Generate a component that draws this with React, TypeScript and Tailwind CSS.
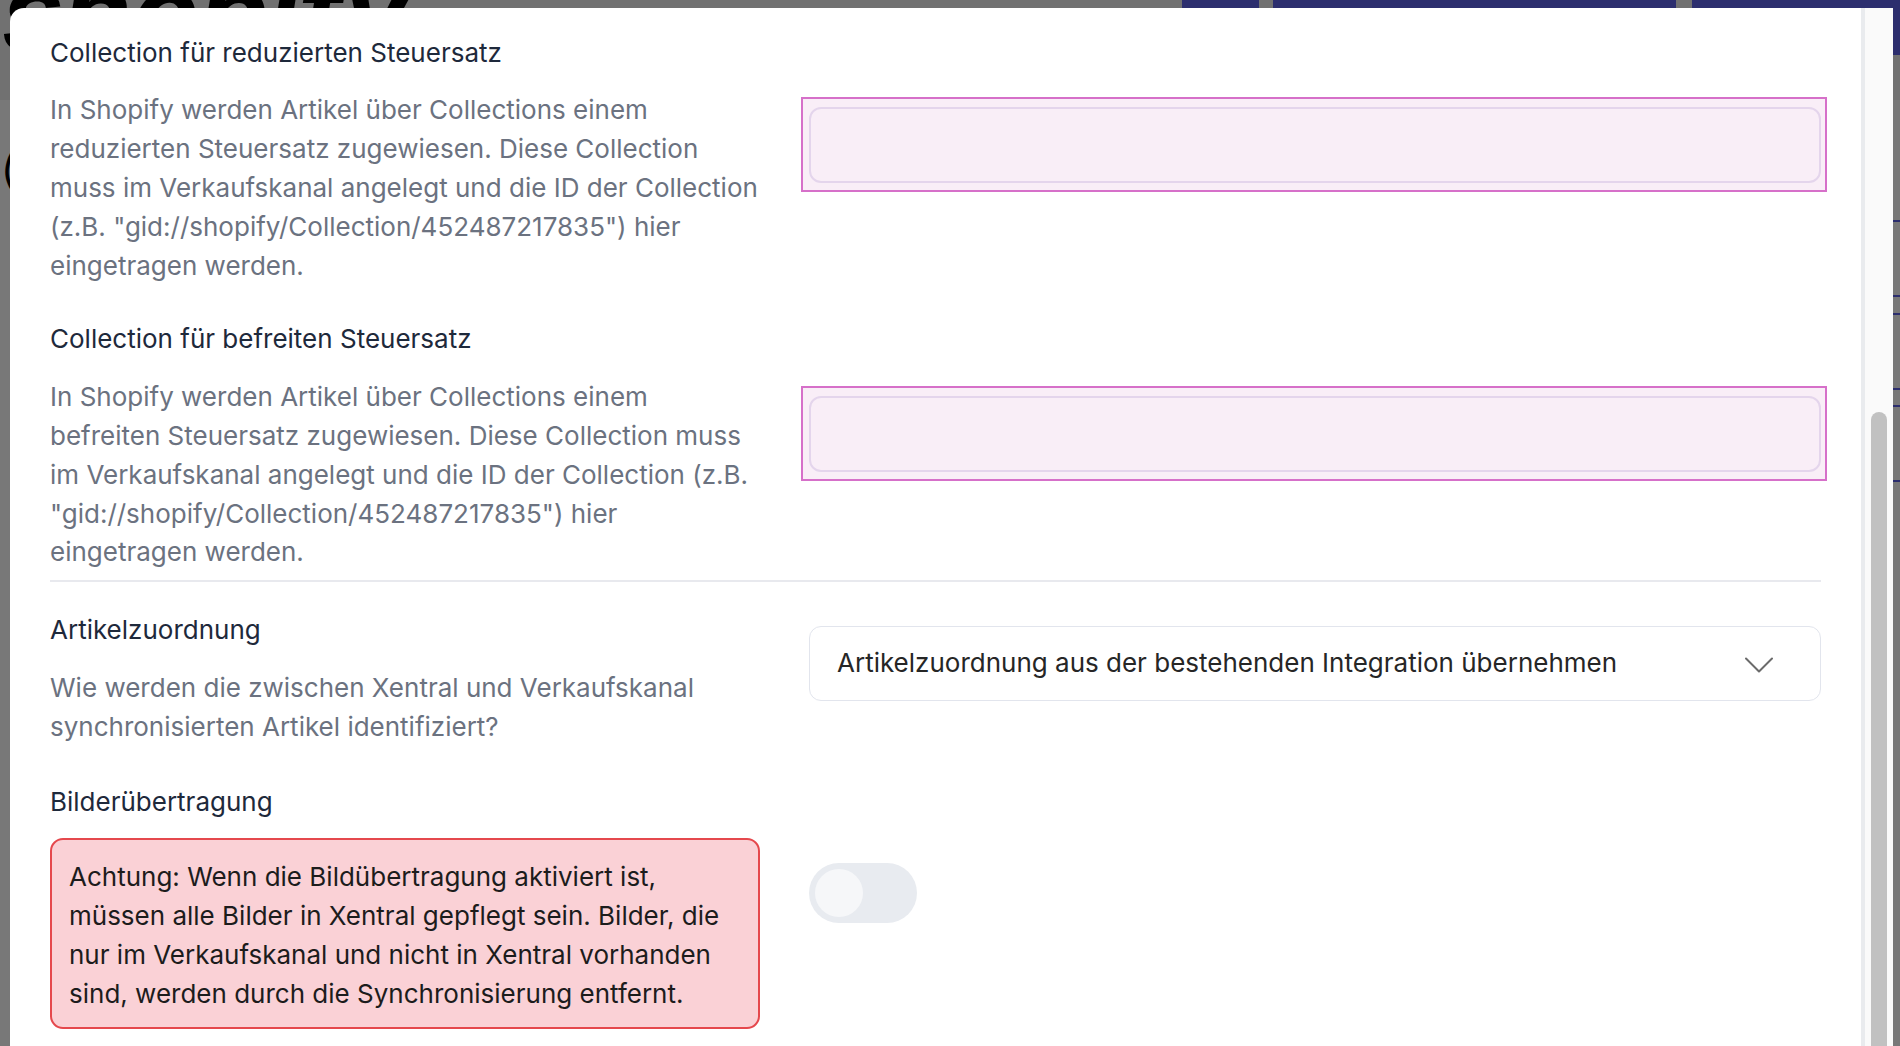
import type { ReactNode } from "react";

function Heading({ children }: { children: ReactNode }) {
	return <h3 className="text-[26px] leading-[38.8px] font-normal text-[#1e293b]">{children}</h3>;
}

function Description({ children }: { children: ReactNode }) {
	return <p className="mt-[19px] text-[26px] leading-[38.8px] text-[#6b7280]">{children}</p>;
}

function HighlightedInput() {
	return (
		<div className="-ml-[8px] -mr-[6px] border-2 border-[#d670c9] bg-[#f9eef7] pl-[6px] pr-[4px] pt-[8px] pb-[7.4px]">
			<input
				type="text"
				className="block h-[76px] w-full rounded-[12px] border-2 border-[#e4d5ec] bg-transparent outline-none"
			/>
		</div>
	);
}

function BackgroundPage() {
	return (
		<div className="flex h-full flex-col">
			<div className="flex h-[100px] items-start overflow-hidden bg-[#f0f0f0]">
				<span className="-mt-[44px] ml-[2px] text-[110px] font-bold italic leading-none text-black">shopify</span>
				<div className="ml-auto flex">
					<div className="h-[55px] w-[77px] bg-[#5f63ea]" />
					<div className="ml-[14px] h-[55px] w-[403px] bg-[#5f63ea]" />
					<div className="ml-[16px] h-[55px] w-[208px] bg-[#5f63ea]" />
				</div>
			</div>
			<div className="flex">
				<div className="pl-[1px] pt-[50px] text-[40px] leading-none text-black">(</div>
				<div className="ml-auto flex w-[600px] flex-col">
					<div className="mt-[120px] h-[2px] bg-[#5f63ea]" />
					<div className="mt-[73px] h-[2px] bg-[#5f63ea]" />
					<div className="mt-[16px] h-[2px] bg-[#5f63ea]" />
					<div className="mt-[73px] h-[2px] bg-[#5f63ea]" />
					<div className="mt-[15px] h-[2px] bg-[#5f63ea]" />
					<div className="mt-[73px] h-[2px] bg-[#5f63ea]" />
				</div>
			</div>
		</div>
	);
}

export default function App() {
	return (
		<div className="relative h-[1046px] w-full overflow-hidden bg-white font-[Inter,sans-serif]">
			<BackgroundPage />
			<div className="absolute inset-0 bg-black/[0.53]" />

			{/* MODAL */}
			<div className="absolute left-[10px] right-[7px] top-[8px] flex h-[1100px] overflow-hidden rounded-tl-[14px] bg-white">
				<div className="flex-1 px-[40px] pt-[25.6px]">
					{/* REDUZIERTER STEUERSATZ */}
					<div className="grid grid-cols-[710px_1fr] gap-x-[49px]">
						<div>
							<Heading>Collection für reduzierten Steuersatz</Heading>
							<Description>
								In Shopify werden Artikel über Collections einem reduzierten Steuersatz zugewiesen. Diese
								Collection muss im Verkaufskanal angelegt und die ID der Collection
								(z.B. "gid://shopify/Collection/452487217835") hier eingetragen werden.
							</Description>
						</div>
						<div className="pt-[63px]">
							<HighlightedInput />
						</div>
					</div>

					{/* BEFREITER STEUERSATZ */}
					<div className="mt-[35px] grid grid-cols-[710px_1fr] gap-x-[49px]">
						<div>
							<Heading>Collection für befreiten Steuersatz</Heading>
							<Description>
								In Shopify werden Artikel über Collections einem befreiten Steuersatz zugewiesen. Diese
								Collection muss im Verkaufskanal angelegt und die ID der Collection (z.B.
								"gid://shopify/Collection/452487217835") hier eingetragen werden.
							</Description>
						</div>
						<div className="pt-[65.5px]">
							<HighlightedInput />
						</div>
					</div>

					<div className="mt-[8px] h-[2px] bg-[#e8e9ee]" />

					{/* ARTIKELZUORDNUNG */}
					<div className="mt-[29px] grid grid-cols-[710px_1fr] gap-x-[49px]">
						<div>
							<Heading>Artikelzuordnung</Heading>
							<Description>
								Wie werden die zwischen Xentral und Verkaufskanal synchronisierten Artikel identifiziert?
							</Description>
						</div>
						<div className="pt-[15px]">
							<div className="flex h-[75px] items-center justify-between rounded-[12px] border-[1.5px] border-[#e2e5ed] bg-white pl-[27px] pr-[47px]">
								<span className="text-[26px] leading-[38.8px] text-[#262626]">
									Artikelzuordnung aus der bestehenden Integration übernehmen
								</span>
								<svg width="28" height="16" viewBox="0 0 28 16" fill="none" className="mt-[3px]">
									<polyline
										points="1 1.5 14 14.5 27 1.5"
										stroke="#6b6b6b"
										strokeWidth="2"
										strokeLinecap="round"
										strokeLinejoin="round"
									/>
								</svg>
							</div>
						</div>
					</div>

					{/* BILDERÜBERTRAGUNG */}
					<div className="mt-[36px] grid grid-cols-[710px_1fr] gap-x-[49px]">
						<div>
							<Heading>Bilderübertragung</Heading>
							<div className="mt-[16.5px] rounded-[13px] border-2 border-[#e5484d] bg-[#fad1d6] pl-[17px] pr-[20px] pt-[17px] pb-[13.5px] text-[26px] leading-[39.2px] text-[#1c1c1c]">
								Achtung: Wenn die Bildübertragung aktiviert ist, müssen alle Bilder in Xentral gepflegt
								sein. Bilder, die nur im Verkaufskanal und nicht in Xentral vorhanden sind, werden durch
								die Synchronisierung entfernt.
							</div>
						</div>
						<div className="pt-[80px]">
							<div className="flex h-[60px] w-[108px] items-center rounded-full bg-[#e8ebf0] px-[6px]">
								<div className="h-[48px] w-[48px] rounded-full bg-[#f6f7f9]" />
							</div>
						</div>
					</div>
				</div>

				{/* SCROLLBAR */}
				<div className="w-[32px] border-l-4 border-[#e9ebee] bg-[#fafafa]">
					<div className="ml-[6px] mt-[404px] h-[720px] w-[16px] rounded-full bg-[#c1c1c1]" />
				</div>
			</div>
		</div>
	);
}
